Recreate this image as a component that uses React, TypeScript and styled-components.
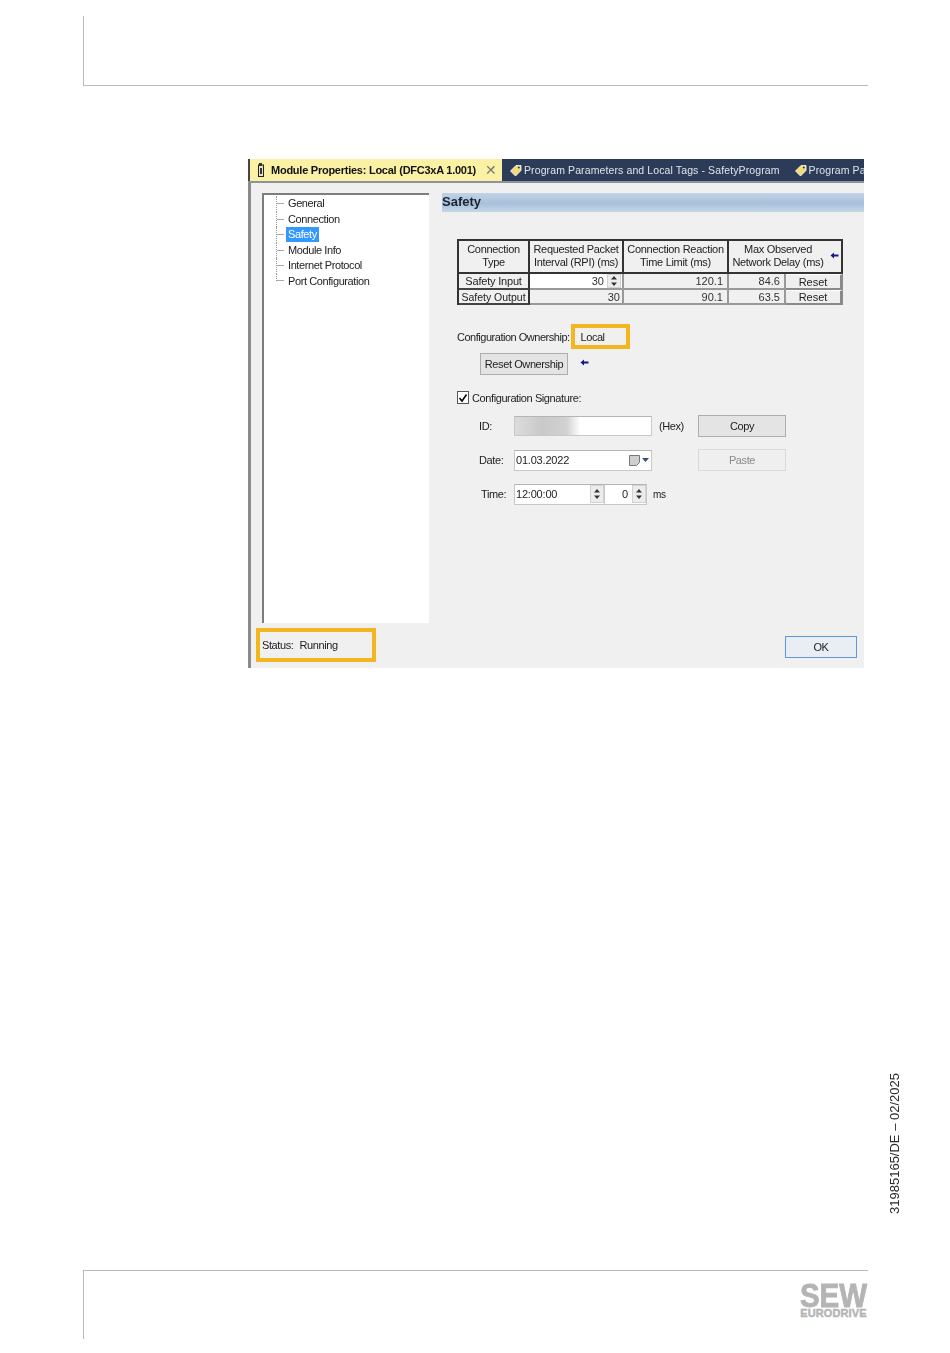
import React, { FC } from 'react';
import styled, { createGlobalStyle } from 'styled-components';

const GlobalStyle = createGlobalStyle`
  html, body {
    margin: 0;
    padding: 0;
    background: #fff;
  }
  * {
    box-sizing: border-box;
  }
  svg {
    flex: none;
  }
`;

const Page = styled.div`
  width: 950px;
  height: 1353px;
  display: flex;
  flex-direction: column;
  padding-top: 16px;
  font-family: 'Liberation Sans', Arial, sans-serif;
  overflow: hidden;
`;

const Header = styled.header`
  width: 785px;
  height: 70px;
  margin-left: 83px;
  border-left: 1px solid #b9b9b9;
  border-bottom: 1px solid #b9b9b9;
`;

const Body = styled.main`
  flex: 1;
  display: flex;
  align-items: flex-start;
`;

const NoteColumn = styled.div`
  align-self: flex-end;
  margin-left: 24px;
  padding-bottom: 56px;
`;

const SideNote = styled.div`
  writing-mode: vertical-rl;
  transform: rotate(180deg);
  font-size: 13px;
  line-height: 14px;
  color: #2a2a2a;
  white-space: nowrap;
`;

const Footer = styled.footer`
  width: 785px;
  height: 69px;
  margin-left: 83px;
  margin-bottom: 14px;
  padding-top: 13px;
  border-left: 1px solid #b9b9b9;
  border-top: 1px solid #b9b9b9;
  display: flex;
  justify-content: flex-end;
`;

const Logo = styled.div`
  width: 69px;
  color: #b4b4b4;
  font-weight: 700;
  display: flex;
  flex-direction: column;
  align-items: center;
`;

const LogoMark = styled.span`
  display: inline-block;
  font-size: 29.5px;
  line-height: 24px;
  -webkit-text-stroke: 0.8px #b4b4b4;
  transform: scaleY(1.15);
`;

const LogoName = styled.span`
  font-size: 11px;
  line-height: 10px;
  letter-spacing: 0.1px;
  -webkit-text-stroke: 0.4px #b4b4b4;
`;

/* the embedded screenshot */
const Dialog = styled.section`
  width: 616px;
  height: 510px;
  margin: 72px 0 0 248px;
  background: #f0f0f0;
  display: flex;
  flex-direction: column;
  font-size: 11px;
  letter-spacing: -0.4px;
  color: #222;
  filter: blur(0.4px);
  overflow: hidden;
`;

const TabBar = styled.div`
  height: 25px;
  flex: none;
  padding-top: 1px;
  background: #fff;
  display: flex;
  border-bottom: 2px solid #8d939b;
  white-space: nowrap;
  overflow: hidden;
`;

const ActiveTab = styled.div`
  width: 254px;
  flex: none;
  padding: 0 5px 0 8px;
  background: #fbf1a5;
  border-left: 2px solid #444;
  color: #111;
  font-weight: 700;
  font-size: 11px;
  letter-spacing: -0.25px;
  display: flex;
  align-items: center;
  gap: 7px;
`;

const CloseMark = styled.span`
  margin-left: auto;
  color: #777;
  font-weight: 400;
  font-size: 14px;
`;

const DocTabs = styled.div`
  flex: 1;
  display: flex;
  background: #2c3b57;
  overflow: hidden;
`;

const DocTab = styled.div`
  flex: none;
  height: 100%;
  color: #dfe4ec;
  font-size: 10.5px;
  letter-spacing: 0.11px;
  display: flex;
  align-items: center;
  gap: 2px;
  padding: 0 7px 0 7px;
`;

const Main = styled.div`
  flex: 1;
  display: flex;
  padding: 10px 0 0 1px;
  border-left: 3px solid #8b8b8b;
  min-height: 0;
`;

const Tree = styled.ul`
  width: 167px;
  flex: none;
  margin: 0 0 0 10px;
  padding: 1px 0 0 12px;
  list-style: none;
  background: #fff;
  border-top: 2px solid #7d7d7d;
  border-left: 2px solid #7d7d7d;
`;

const TreeRow = styled.li`
  height: 15.5px;
  display: flex;
  align-items: center;
`;

const Twig = styled.span<{ $last?: boolean }>`
  width: 10px;
  flex: none;
  align-self: flex-start;
  height: ${({ $last }) => ($last ? '50%' : '100%')};
  border-left: 1px dotted #999;
  background: linear-gradient(#aaa, #aaa) no-repeat left
    ${({ $last }) => ($last ? 'bottom' : 'center')} / 80% 1px;
`;

const TreeLabel = styled.span<{ $selected?: boolean }>`
  padding: 0 2px;
  line-height: 15px;
  background: ${({ $selected }) => ($selected ? '#3399ff' : 'transparent')};
  color: ${({ $selected }) => ($selected ? '#fff' : '#222')};
`;

const Pane = styled.div`
  flex: 1;
  margin-left: 13px;
  min-width: 0;
`;

const SectionTitle = styled.h2`
  margin: 0;
  height: 19px;
  background: linear-gradient(to bottom, #c3d3e6, #a7c1dc 55%, #c5d6e8);
  font-size: 13px;
  line-height: 17px;
  letter-spacing: 0;
  font-weight: 700;
  color: #1d2430;
`;

const PaneBody = styled.div`
  padding: 27px 0 0 15px;
`;

const ConnectionTable = styled.div`
  width: 386px;
  height: 66px;
  display: grid;
  grid-template-columns: 71px 94px 105px 57px 57px;
  grid-template-rows: 33px 16px 15px;
  border-top: 2px solid #333;
  border-left: 2px solid #333;
  letter-spacing: -0.3px;
`;

const HeadCell = styled.div<{ $wide?: boolean }>`
  grid-column: ${({ $wide }) => ($wide ? 'span 2' : 'auto')};
  position: relative;
  border-right: 2px solid #333;
  border-bottom: 2px solid #333;
  text-align: center;
  line-height: 13px;
  padding: 2px ${({ $wide }) => ($wide ? '14px' : '0')} 0 0;
  white-space: nowrap;
`;

const RowLabel = styled.div<{ $small?: boolean }>`
  border-right: 2px solid #333;
  border-bottom: 2px solid #444;
  text-align: center;
  font-size: ${({ $small }) => ($small ? '10.5px' : '11px')};
  letter-spacing: ${({ $small }) => ($small ? '0' : '-0.2px')};
  line-height: 14px;
  white-space: nowrap;
`;

const ValueCell = styled.div<{ $input?: boolean }>`
  display: flex;
  justify-content: flex-end;
  align-items: center;
  padding-right: ${({ $input }) => ($input ? '1px' : '4px')};
  letter-spacing: 0;
  color: #333;
  background: ${({ $input }) => ($input ? '#fff' : 'transparent')};
  border-right: 2px solid #999;
  border-bottom: 2px solid #999;
`;

const IntervalCell = styled(ValueCell)`
  padding-right: 2px;
`;

const ResetCell = styled.div`
  display: flex;
  align-items: center;
  justify-content: center;
  letter-spacing: 0;
  background: #efefef;
  border-top: 1px solid #fff;
  border-right: 3px solid #8a8a8a;
  border-bottom: 2px solid #8a8a8a;
`;

const InfoArrow = styled.span`
  position: absolute;
  right: 2px;
  top: 11px;
  line-height: 0;
`;

const OwnershipRow = styled.div`
  margin-top: 19px;
  height: 25px;
  letter-spacing: -0.48px;
  display: flex;
  align-items: center;
`;

const Highlight = styled.div`
  border: 4px solid #f2b61e;
  display: flex;
  align-items: center;
`;

const OwnerBox = styled(Highlight)`
  width: 59px;
  height: 25px;
  margin-left: 1px;
  padding-left: 6px;
`;

const ResetRow = styled.div`
  margin: 4px 0 0 23px;
  display: flex;
  align-items: center;
  gap: 12px;
`;

const ResetArrow = styled.span`
  line-height: 0;
  margin-bottom: 4px;
`;

const Button = styled.div<{ $disabled?: boolean }>`
  height: 22px;
  display: flex;
  align-items: center;
  justify-content: center;
  white-space: nowrap;
  background: ${({ $disabled }) => ($disabled ? '#efefef' : '#e4e4e4')};
  border: 1px solid ${({ $disabled }) => ($disabled ? '#d9d9d9' : '#adadad')};
  color: ${({ $disabled }) => ($disabled ? '#8a8a8a' : '#222')};
`;

const ResetButton = styled(Button)`
  width: 88px;
`;

const CheckRow = styled.label`
  margin-top: 16px;
  height: 13px;
  display: flex;
  align-items: center;
  gap: 3px;
`;

const CheckBox = styled.span`
  width: 12px;
  height: 13px;
  background: #fff;
  border: 1px solid #555;
  display: flex;
  align-items: center;
  justify-content: center;
`;

const SignatureForm = styled.div`
  margin: 11px 0 0 22px;
  display: grid;
  grid-template-columns: 35px 138px 46px 88px;
  grid-auto-rows: 22px;
  row-gap: 12px;
  align-items: center;
`;

const Field = styled.div`
  height: 21px;
  padding: 0 1px;
  background: #fff;
  border: 1px solid #c8c8c8;
  border-top-color: #b4b4b4;
  letter-spacing: -0.2px;
  display: flex;
  align-items: center;
`;

const BlurredField = styled(Field)`
  height: 20px;
  background: linear-gradient(to right, #dcdcdc, #c9c9c9 20%, #d2d2d2 38%, #fff 48%);
`;

const HexLabel = styled.span`
  padding-left: 7px;
`;

const TimeLabel = styled.span`
  padding-left: 2px;
`;

const DatePicker = styled.span`
  margin-left: auto;
  margin-right: 1px;
  display: flex;
  align-items: center;
  gap: 2px;
`;

const TimeGroup = styled.div`
  grid-column: span 3;
  display: flex;
  align-items: center;
`;

const TimeField = styled(Field)`
  width: 91px;
  padding-right: 0;
`;

const MsField = styled(Field)`
  width: 42px;
  border-left: 0;
  padding: 0;
  justify-content: flex-end;
`;

const MsLabel = styled.span`
  margin-left: 6px;
  font-size: 10px;
`;

const Spin = styled.span`
  margin-left: auto;
  width: 14px;
  height: 18px;
  flex: none;
  background: #ececec;
  border: 1px solid #d2d2d2;
  display: flex;
  align-items: center;
  justify-content: center;
`;

const MsSpin = styled(Spin)`
  margin-left: 4px;
`;

const TableSpin = styled(Spin)`
  margin-left: 3px;
  height: 14px;
`;

const BottomBar = styled.div`
  height: 45px;
  flex: none;
  display: flex;
  align-items: flex-start;
  justify-content: space-between;
  padding: 5px 7px 0 5px;
  border-left: 3px solid #8b8b8b;
`;

const StatusBox = styled(Highlight)`
  width: 120px;
  height: 34px;
  padding-left: 2px;
  gap: 6px;
`;

const OkButton = styled.div`
  width: 72px;
  height: 22px;
  margin-top: 8px;
  display: flex;
  align-items: center;
  justify-content: center;
  background: #e8eef4;
  border: 1px solid #5b9ad2;
`;

const ModuleIcon: FC = () => (
  <svg width="6" height="14" viewBox="0 0 6 14">
    <rect x="0.5" y="2" width="5" height="11.5" fill="#e8e3c0" stroke="#222" />
    <rect x="1" y="0" width="3" height="3" fill="#333" />
    <rect x="2" y="5" width="2" height="6" fill="#333" />
  </svg>
);

const TagIcon: FC = () => (
  <svg width="13" height="13" viewBox="0 0 13 13">
    <path d="M1.5 7 7 1.5h5v5L6.5 12z" fill="#f0dc78" stroke="#fff" strokeWidth="0.8" />
    <circle cx="9.8" cy="3.4" r="1" fill="#2c3b57" />
  </svg>
);

const LeftArrow: FC = () => (
  <svg width="9" height="7" viewBox="0 0 9 7">
    <path d="M0.5 3.5 4 0.5v2h4.5v2H4v2z" fill="#14148c" />
  </svg>
);

const SpinArrows: FC = () => (
  <svg width="8" height="12" viewBox="0 0 8 12">
    <path d="M4 1 7 4.5H1zM4 11 1 7.5h6z" fill="#333" />
  </svg>
);

const CheckMark: FC = () => (
  <svg width="10" height="10" viewBox="0 0 10 10">
    <path d="M1.5 5 4 8l4.5-6.5" fill="none" stroke="#111" strokeWidth="1.7" />
  </svg>
);

const CalendarIcon: FC = () => (
  <svg width="11" height="11" viewBox="0 0 11 11">
    <path d="M0.5 0.5h10v7l-3 3h-7z" fill="#cfcfcf" stroke="#777" />
  </svg>
);

const DropArrow: FC = () => (
  <svg width="7" height="4" viewBox="0 0 7 4">
    <path d="M0 0h7L3.5 4z" fill="#33527a" />
  </svg>
);

const treeItems = ['General', 'Connection', 'Safety', 'Module Info', 'Internet Protocol', 'Port Configuration'];

const App: FC = () => {
  return (
    <Page>
      <GlobalStyle />
      <Header />
      <Body>
        <Dialog>
          <TabBar>
            <ActiveTab>
              <ModuleIcon />
              Module Properties: Local (DFC3xA 1.001)
              <CloseMark>✕</CloseMark>
            </ActiveTab>
            <DocTabs>
              <DocTab>
                <TagIcon />
                Program Parameters and Local Tags - SafetyProgram
              </DocTab>
              <DocTab>
                <TagIcon />
                Program Pa
              </DocTab>
            </DocTabs>
          </TabBar>
          <Main>
            <Tree>
              {treeItems.map((item, i) => (
                <TreeRow key={item}>
                  <Twig $last={i === treeItems.length - 1} />
                  <TreeLabel $selected={item === 'Safety'}>{item}</TreeLabel>
                </TreeRow>
              ))}
            </Tree>
            <Pane>
              <SectionTitle>Safety</SectionTitle>
              <PaneBody>
                <ConnectionTable>
                  <HeadCell>
                    Connection
                    <br />
                    Type
                  </HeadCell>
                  <HeadCell>
                    Requested Packet
                    <br />
                    Interval (RPI) (ms)
                  </HeadCell>
                  <HeadCell>
                    Connection Reaction
                    <br />
                    Time Limit (ms)
                  </HeadCell>
                  <HeadCell $wide>
                    Max Observed
                    <br />
                    Network Delay (ms)
                    <InfoArrow>
                      <LeftArrow />
                    </InfoArrow>
                  </HeadCell>
                  <RowLabel>Safety Input</RowLabel>
                  <ValueCell $input>
                    30
                    <TableSpin>
                      <SpinArrows />
                    </TableSpin>
                  </ValueCell>
                  <ValueCell>120.1</ValueCell>
                  <ValueCell>84.6</ValueCell>
                  <ResetCell>Reset</ResetCell>
                  <RowLabel $small>Safety Output</RowLabel>
                  <IntervalCell>30</IntervalCell>
                  <ValueCell>90.1</ValueCell>
                  <ValueCell>63.5</ValueCell>
                  <ResetCell>Reset</ResetCell>
                </ConnectionTable>

                <OwnershipRow>
                  Configuration Ownership:
                  <OwnerBox>Local</OwnerBox>
                </OwnershipRow>
                <ResetRow>
                  <ResetButton>Reset Ownership</ResetButton>
                  <ResetArrow>
                    <LeftArrow />
                  </ResetArrow>
                </ResetRow>

                <CheckRow>
                  <CheckBox>
                    <CheckMark />
                  </CheckBox>
                  Configuration Signature:
                </CheckRow>

                <SignatureForm>
                  <span>ID:</span>
                  <BlurredField />
                  <HexLabel>(Hex)</HexLabel>
                  <Button>Copy</Button>

                  <span>Date:</span>
                  <Field>
                    01.03.2022
                    <DatePicker>
                      <CalendarIcon />
                      <DropArrow />
                    </DatePicker>
                  </Field>
                  <span />
                  <Button $disabled>Paste</Button>

                  <TimeLabel>Time:</TimeLabel>
                  <TimeGroup>
                    <TimeField>
                      12:00:00
                      <Spin>
                        <SpinArrows />
                      </Spin>
                    </TimeField>
                    <MsField>
                      0
                      <MsSpin>
                        <SpinArrows />
                      </MsSpin>
                    </MsField>
                    <MsLabel>ms</MsLabel>
                  </TimeGroup>
                </SignatureForm>
              </PaneBody>
            </Pane>
          </Main>
          <BottomBar>
            <StatusBox>
              <span>Status:</span>
              <span>Running</span>
            </StatusBox>
            <OkButton>OK</OkButton>
          </BottomBar>
        </Dialog>
        <NoteColumn>
          <SideNote>31985165/DE – 02/2025</SideNote>
        </NoteColumn>
      </Body>
      <Footer>
        <Logo>
          <LogoMark>SEW</LogoMark>
          <LogoName>EURODRIVE</LogoName>
        </Logo>
      </Footer>
    </Page>
  );
};

export default App;
